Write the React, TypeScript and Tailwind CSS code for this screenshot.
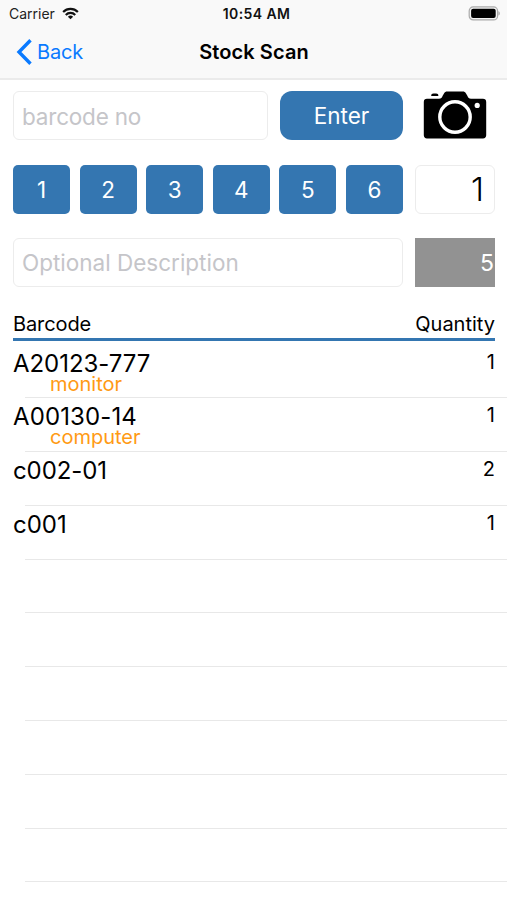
const items = [
  { code: 'A20123-777', note: 'monitor', qty: 1, tracking: 'tracking-[-0.050px]' },
  { code: 'A00130-14', note: 'computer', qty: 1, tracking: 'tracking-[0.120px]' },
  { code: 'c002-01', note: '', qty: 2, tracking: 'tracking-[-0.100px]' },
  { code: 'c001', note: '', qty: 1, tracking: 'tracking-normal' },
];
const emptyRows = [0, 1, 2, 3, 4, 5, 6];

function StatusBar() {
  return (
    <div className="grid h-[27px] grid-cols-3 items-center pl-[9px] pr-[7px] text-[14px] leading-[27px]">
      <div className="flex items-center gap-[7px]">
        <span className="text-[#222]">Carrier</span>
        <svg width="17" height="13" viewBox="0 0 18 13" fill="none" stroke="#111" strokeWidth="2.3">
          <path d="M1.2 4.9a11 11 0 0 1 15.6 0" />
          <path d="M4 8a7 7 0 0 1 10 0" />
          <path d="M9 12.6 6.2 9.9a4 4 0 0 1 5.6 0Z" fill="#111" stroke="none" />
        </svg>
      </div>
      <span className="whitespace-nowrap pl-[4px] text-center text-[14px] font-semibold tracking-[0.4px] text-[#111]">10:54 AM</span>
      <svg className="-mt-px justify-self-end" width="32" height="15" viewBox="0 0 32 15">
        <rect x="1.2" y="0.9" width="28.4" height="13" rx="4" fill="#f3f3f3" stroke="#aaa" strokeWidth="1.2" />
        <rect x="3.1" y="2.8" width="24.6" height="9.2" rx="2" fill="#000" />
        <path d="M30.5 5.3c1.6.7 1.600 3.500 0 4.200Z" fill="#999" />
      </svg>
    </div>
  );
}

function Camera() {
  return (
    <svg className="ml-[8px]" width="64" height="49" viewBox="0 0 64 49">
      <path
        d="M4 7.800H16c2.200 0 2.800-1 3.800-3.200L21 2.400C21.800 1 22.800.4 24.200.4H39.800c1.400 0 2.400.6 3.200 2L44.200 4.600c1 2.200 1.800 3.200 3.800 3.200H60c2 0 3.200 1.200 3.200 3.200V44.300c0 2-1.200 3.200-3.200 3.200H4c-2 0-3.200-1.200-3.200-3.200V11c0-2 1.200-3.200 3.200-3.200Z"
        fill="#000"
      />
      <path d="M8.200 4.900c0-1.500.8-2.300 2.300-2.300h2.600c1.500 0 2.300.8 2.300 2.300Z" fill="#000" />
      <circle cx="32" cy="26" r="15.200" fill="#000" stroke="#fff" strokeWidth="3.400" />
      <circle cx="54.200" cy="14.400" r="2.600" fill="#fff" />
    </svg>
  );
}

export default function App() {
  return (
    <div className="h-[900px] w-[507px] overflow-hidden bg-white font-['Inter',sans-serif] text-black">
      <header className="h-[80px] border-b-2 border-[#ebebeb] bg-[#f9f9f9]">
        <StatusBar />
        <div className="grid h-[50px] grid-cols-3 items-center">
          <div className="flex items-center pl-[16px] text-[#0a7aff]">
            <svg width="16" height="26" viewBox="0 0 16 26" fill="none" stroke="currentColor" strokeWidth="3.4">
              <path d="M14.5 1.300 3 13l11.500 11.700" />
            </svg>
            <span className="ml-[5px] text-[20px] tracking-[-0.2px]">Back</span>
          </div>
          <h1 className="pl-[1px] text-center text-[20px] font-semibold tracking-[0.1px]">Stock Scan</h1>
        </div>
      </header>

      <main className="pl-[13px] pt-[11px]">
        <div className="flex h-[49px]">
          <div className="w-[255px] rounded-[6px] border border-[#ececec] pl-[8px] text-[22.500px] leading-[49px] tracking-[-0.2px] text-[#c5c5c9]">
            barcode no
          </div>
          <button className="ml-[12px] w-[123px] rounded-[12px] bg-[#3476b1] pt-[1px] text-[22.500px] text-white">Enter</button>
          <div className="ml-[12px] w-[80px]">
            <Camera />
          </div>
        </div>

        <div className="mt-[25px] flex h-[49px]">
          <div className="flex w-[390px] gap-[9.400px]">
            {[1, 2, 3, 4, 5, 6].map((n) => (
              <button key={n} className="flex-1 rounded-[5px] bg-[#3476b1] text-[22.500px] text-white">
                {n}
              </button>
            ))}
          </div>
          <div className="ml-[12px] w-[80px] rounded-[6px] border border-[#ececec] pr-[10px] text-right text-[33px] font-light leading-[47px]">
            1
          </div>
        </div>

        <div className="mt-[24px] flex h-[49px]">
          <div className="w-[390px] rounded-[6px] border border-[#ececec] pl-[8px] text-[22.500px] leading-[48px] text-[#c5c5c9]">
            Optional Description
          </div>
          <div className="ml-[12px] h-[49px] w-[80px] bg-[#929292] pr-[1px] text-right text-[23px] leading-[50px] text-white">
            5
          </div>
        </div>

        <div className="mt-[23px] flex h-[31px] w-[482px] justify-between border-b-[3px] border-[#3476b1] text-[20px] leading-[29px]">
          <span className="tracking-[-0.1px]">Barcode</span>
          <span>Quantity</span>
        </div>

        <ul className="pt-[3.500px]">
          {items.map((item) => (
            <li key={item.code} className="h-[53.800px]">
              <div className="flex h-[52.800px] justify-between pr-[12px]">
                <div className="pt-[7px]">
                  <div className={`text-[24px] leading-[23px] ${item.tracking}`}>{item.code}</div>
                  <div className="pl-[37px] text-[20px] leading-[18px] text-[#ff9a14]">{item.note}</div>
                </div>
                <span className="pt-[5px] text-[20px] leading-[24px]">{item.qty}</span>
              </div>
              <div className="ml-[12px] h-px bg-[#e8e8e8]" />
            </li>
          ))}
          {emptyRows.map((row) => (
            <li key={row} className="flex h-[53.800px] flex-col justify-end">
              <div className="ml-[12px] h-px bg-[#e8e8e8]" />
            </li>
          ))}
        </ul>
      </main>
    </div>
  );
}
